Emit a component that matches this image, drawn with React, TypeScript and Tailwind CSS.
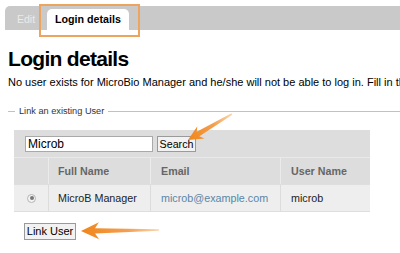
import React from 'react';

function Arrow({ x, y, angle, length, head = 18 }: { x: number; y: number; angle: number; length: number; head?: number }) {
  const w = head * 0.47;
  const pts = [
    [0, 0],
    [head, -w],
    [head * 0.78, -2.6],
    [length, -0.8],
    [length, 0.8],
    [head * 0.78, 2.6],
    [head, w],
  ]
    .map((p) => p.join(','))
    .join(' ');
  return (
    <polygon points={pts} fill="url(#arrowFade)" transform={`translate(${x},${y}) rotate(${angle})`} />
  );
}

export default function App() {
  return (
    <div className="relative w-[400px] h-[253px] overflow-hidden bg-white text-black font-['Liberation_Sans',Arial,sans-serif]">
      {/* Tabs */}
      <div className="pt-[6px] pl-[5px]">
        <div className="h-[24px] bg-[#c9c9c9] rounded-tl-[5px] flex items-end">
          <div className="w-[42px] h-[21px] flex items-center justify-center text-[10.5px] text-[#ebebeb]">Edit</div>
          <div className="w-[82px] h-[21px] bg-white rounded-t-[5px] flex items-center justify-center text-[10.7px] font-bold">
            Login details
          </div>
        </div>
      </div>

      <h1 className="mt-[17px] ml-[8px] text-[21px] leading-[24px] font-bold tracking-[-0.7px]">Login details</h1>
      <p className="ml-[8px] mt-[4px] text-[11px] leading-[14px] whitespace-nowrap">
        No user exists for MicroBio Manager and he/she will not be able to log in. Fill in the form below to create one.
      </p>

      {/* Fieldset legend */}
      <div className="mt-[17px] ml-[8px] flex items-center">
        <div className="w-[7px] h-px bg-[#9fcbe6]" />
        <span className="mx-[4px] text-[9.2px] leading-[11px] text-[#333]">Link an existing User</span>
        <div className="flex-1 h-px bg-[#9fcbe6]" />
      </div>

      {/* Search + table */}
      <div className="mt-[13px] ml-[14px] w-[356px]">
        <div className="h-[28px] bg-[#dddddd] flex items-center gap-[4px] pl-[11px] border-b border-[#e9e9e9]">
          <div className="w-[128px] h-[16px] border border-[#a9a9a9] bg-white text-[12px] leading-[14px] pl-[2px]">Microb</div>
          <div className="w-[39px] h-[16px] border border-[#9a9a9a] bg-[#f2f2f2] text-[10.7px] leading-[14px] flex items-center justify-center">
            Search
          </div>
        </div>
        <div className="grid grid-cols-[34px_102px_130px_90px] h-[26px] bg-[#dddddd] text-[10.7px] font-bold text-[#666]">
          <div />
          <div className="border-l border-[#ebebeb] pl-[9px] flex items-center">Full Name</div>
          <div className="border-l border-[#ebebeb] pl-[10px] flex items-center">Email</div>
          <div className="border-l border-[#ebebeb] pl-[10px] flex items-center">User Name</div>
        </div>
        <div className="grid grid-cols-[34px_102px_130px_90px] h-[28px] bg-[#eeeeee] text-[10.75px] border-t border-b border-[#dedede]">
          <div className="flex items-center justify-center pl-[1px]">
            <span className="w-[9px] h-[9px] rounded-full border border-[#b5b5b5] bg-[#f4f4f4] flex items-center justify-center">
              <span className="w-[4px] h-[4px] rounded-full bg-[#777]" />
            </span>
          </div>
          <div className="border-l border-[#dcdcdc] pl-[9px] flex items-center text-[#222]">MicroB Manager</div>
          <div className="border-l border-[#dcdcdc] pl-[10px] flex items-center text-[#5a86a6]">microb@example.com</div>
          <div className="border-l border-[#dcdcdc] pl-[10px] flex items-center text-[#222]">microb</div>
        </div>
      </div>

      <div className="mt-[11px] ml-[24px] w-[52px] h-[17px] border border-[#9a9a9a] bg-[#f2f2f2] text-[11px] flex items-center justify-center">
        Link User
      </div>

      {/* Highlight box around active tab */}
      <div className="absolute left-[39px] top-[4px] w-[101px] h-[33px] border-2 border-[#eda45f] pointer-events-none" />

      {/* Annotation arrows */}
      <svg className="absolute left-0 top-0 pointer-events-none" width="400" height="253" viewBox="0 0 400 253">
        <defs>
          <linearGradient id="arrowFade" x1="0" y1="0" x2="1" y2="0">
            <stop offset="0" stopColor="#f08518" />
            <stop offset="0.6" stopColor="#f4a050" />
            <stop offset="1" stopColor="#fbd6ad" />
          </linearGradient>
        </defs>
        <Arrow x={188} y={140} angle={-30.6} length={51} head={15} />
        <Arrow x={81} y={231} angle={-0.7} length={78} head={18} />
      </svg>
    </div>
  );
}
